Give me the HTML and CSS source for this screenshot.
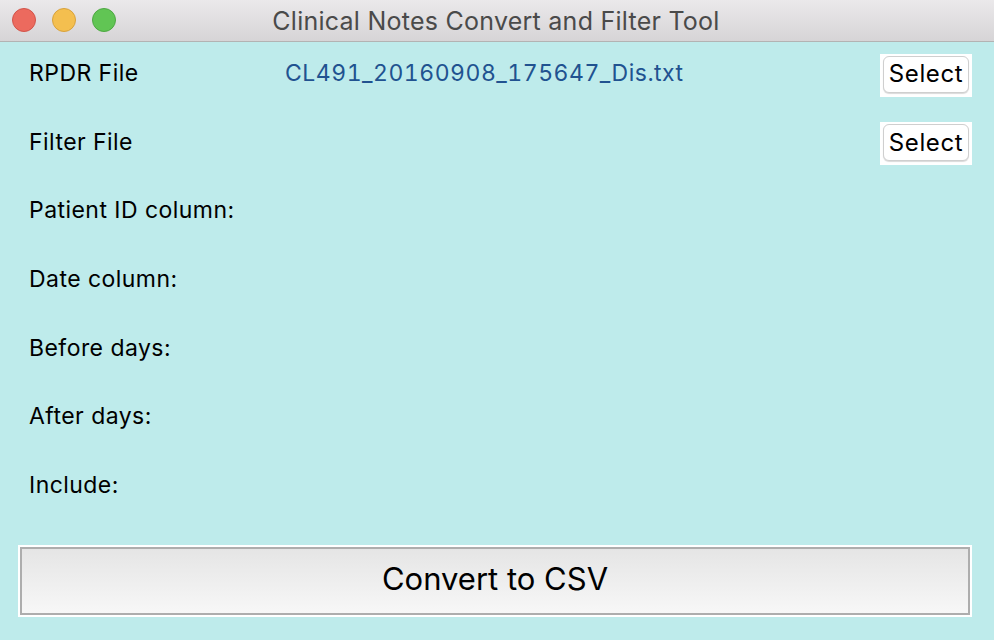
FILE: index.html
```html
<!DOCTYPE html>
<html>
<head>
<meta charset="utf-8">
<link rel="stylesheet" href="styles.css">
</head>
<body>
<div class="window">
  <div class="titlebar">
    <div class="lights">
      <span class="light red"></span>
      <span class="light yellow"></span>
      <span class="light green"></span>
    </div>
    <div class="title">Clinical Notes Convert and Filter Tool</div>
  </div>
  <div class="content">
    <div class="rows">
      <div class="row">
        <span class="label">RPDR File</span>
        <span class="value">CL491_20160908_175647_Dis.txt</span>
        <span class="btn-wrap"><button class="select">Select</button></span>
      </div>
      <div class="row">
        <span class="label">Filter File</span>
        <span class="value"></span>
        <span class="btn-wrap"><button class="select">Select</button></span>
      </div>
      <div class="row"><span class="label">Patient ID column:</span></div>
      <div class="row"><span class="label">Date column:</span></div>
      <div class="row"><span class="label">Before days:</span></div>
      <div class="row"><span class="label">After days:</span></div>
      <div class="row"><span class="label">Include:</span></div>
    </div>
    <div class="convert-wrap">
      <button class="convert">Convert to CSV</button>
    </div>
  </div>
</div>
</body>
</html>
```
FILE: styles.css
```css
html, body {
  margin: 0;
  padding: 0;
}
body {
  width: 994px;
  height: 640px;
  overflow: hidden;
  background: #beebeb;
  font-family: Inter, "Liberation Sans", sans-serif;
}
.window {
  width: 994px;
  height: 640px;
  display: flex;
  flex-direction: column;
}
.titlebar {
  position: relative;
  height: 41px;
  border-bottom: 1px solid #b3b3b3;
  background: linear-gradient(#ebe9eb, #d6d4d6);
  display: flex;
  align-items: center;
  justify-content: center;
}
.lights {
  position: absolute;
  left: 12px;
  top: 8px;
  display: flex;
  gap: 16px;
}
.light {
  width: 22px;
  height: 22px;
  border-radius: 50%;
  border: 1px solid rgba(0,0,0,0.12);
}
.red { background: #ec6a5e; border-color: #d2544a; }
.yellow { background: #f4bf4f; border-color: #d8a23c; }
.green { background: #61c554; border-color: #4ea843; }
.title {
  font-size: 25px;
  color: #4a4a4a;
  letter-spacing: 0.25px;
  margin-top: 1px;
  margin-left: -2px;
}
.content {
  flex: 1;
  background: #beebeb;
  padding-top: 11px;
}
.rows {
  display: flex;
  flex-direction: column;
  gap: 24.65px;
}
.row {
  height: 44px;
  display: flex;
  align-items: center;
  padding-left: 29px;
  padding-right: 22px;
}
.label {
  font-size: 23px;
  letter-spacing: 0.45px;
  color: #000;
  width: 256px;
  margin-top: -4px;
}
.value {
  flex: 1;
  font-size: 23px;
  color: #215290;
  margin-top: -4px;
  font-variant-numeric: tabular-nums;
  letter-spacing: 0.5px;
}
.btn-wrap {
  width: 92px;
  height: 43px;
  background: #fff;
  display: flex;
  justify-content: center;
  align-items: flex-start;
  padding-top: 2px;
  box-sizing: border-box;
}
.select {
  width: 86px;
  height: 37px;
  background: #fff;
  border: 1px solid #cfcfcf;
  border-radius: 6px;
  box-shadow: 0 1px 1px rgba(0,0,0,0.15);
  font-family: Inter, "Liberation Sans", sans-serif;
  font-size: 24px;
  letter-spacing: 0.6px;
  color: #000;
  padding: 0;
  line-height: 1;
}
.convert-wrap {
  margin: 36px 22px 0 18px;
  background: #fff;
  padding: 2px;
  width: 950px;
  box-sizing: content-box;
}
.convert {
  display: block;
  width: 950px;
  height: 68px;
  border: 2px solid #adadad;
  background: linear-gradient(#e5e5e5, #f7f7f7);
  font-family: Inter, "Liberation Sans", sans-serif;
  font-size: 31px;
  color: #000;
  padding: 0 0 5px 0;
  box-sizing: border-box;
}
```
